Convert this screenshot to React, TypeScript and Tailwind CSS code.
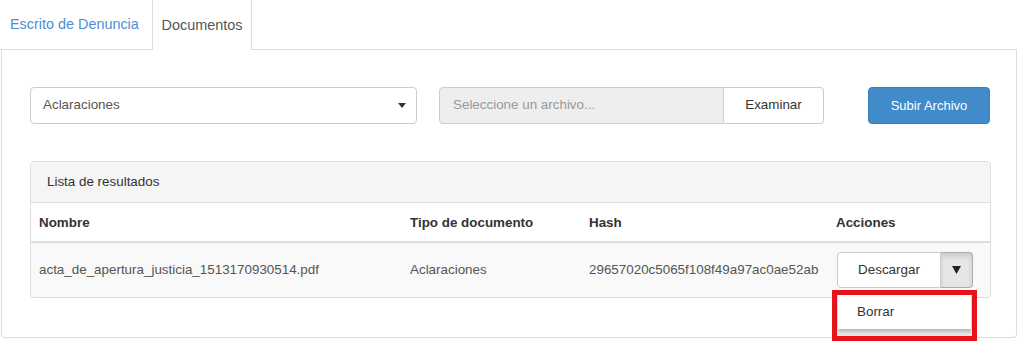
export default function App() {
  return (
    <div className="w-[1024px] h-[356px] bg-white text-[13.4px] text-[#555] font-['Liberation_Sans',Arial,sans-serif] overflow-hidden">
      {/* tabs */}
      <div className="flex h-[50px]">
        <div className="w-[152px] h-full flex items-center pl-[10px] pt-[1px] text-[14.4px] text-[#4a8fd6] border-b border-[#ddd]">
          Escrito de Denuncia
        </div>
        <div className="w-[100px] h-full flex items-center justify-center pt-[1px] text-[14.4px] text-[#555] border-x border-[#ddd] bg-white">
          Documentos
        </div>
        <div className="w-[765px] border-b border-[#ddd]" />
      </div>

      {/* tab content */}
      <div className="ml-[1px] w-[1016px] h-[288px] border-x border-b border-[#ddd] rounded-b-[4px] pt-[37px] pl-[28px] pr-[25px]">
        <div className="flex items-center h-[37px]">
          <div className="w-[387px] h-full border border-[#ccc] rounded-[4px] flex items-center justify-between pl-[12px] pr-[9px]">
            <span>Aclaraciones</span>
            <svg width="8" height="5" viewBox="0 0 8 5" className="mr-[1px]">
              <path d="M0 0 L8 0 L4 5 Z" fill="#333" />
            </svg>
          </div>
          <div className="ml-[22px] w-[385px] h-full flex">
            <div className="flex-1 h-full bg-[#eee] border border-[#ccc] rounded-l-[4px] flex items-center pl-[13px] text-[#999]">
              Seleccione un archivo...
            </div>
            <div className="w-[100px] h-full bg-white border border-l-0 border-[#ccc] rounded-r-[4px] flex items-center justify-center text-[#333]">
              Examinar
            </div>
          </div>
          <div className="ml-[44px] w-[122px] h-full bg-[#428bca] border border-[#3a7fbd] rounded-[4px] text-white text-[13px] flex items-center justify-center">
            Subir Archivo
          </div>
        </div>

        {/* results panel */}
        <div className="mt-[37px] w-[961px] border border-[#ddd] rounded-[4px] overflow-visible">
          <div className="h-[41px] bg-[#f5f5f5] border-b border-[#ddd] rounded-t-[4px] flex items-center pl-[16px] text-[#333]">
            Lista de resultados
          </div>
          <div className="grid grid-cols-[371px_179px_247px_1fr] h-[40px] border-b-2 border-[#ddd] items-center pt-[2px] font-bold text-[#333]">
            <div className="pl-[8px]">Nombre</div>
            <div className="pl-[8px]">Tipo de documento</div>
            <div className="pl-[8px]">Hash</div>
            <div className="pl-[8px]">Acciones</div>
          </div>
          <div className="grid grid-cols-[371px_179px_247px_1fr] h-[54px] bg-[#f9f9f9] items-center rounded-b-[4px]">
            <div className="pl-[8px]">acta_de_apertura_justicia_1513170930514.pdf</div>
            <div className="pl-[8px]">Aclaraciones</div>
            <div className="pl-[8px]">29657020c5065f108f49a97ac0ae52ab</div>
            <div className="pl-[9px] relative">
              <div className="flex h-[36px] w-[136px]">
                <div className="w-[104px] h-full bg-white border border-[#ccc] rounded-l-[4px] flex items-center justify-center text-[#333]">
                  Descargar
                </div>
                <div className="w-[32px] h-full bg-[#e6e6e6] border border-l-0 border-[#adadad] rounded-r-[4px] flex items-center justify-center shadow-[inset_0_3px_5px_rgba(0,0,0,0.125)]">
                  <svg width="9" height="8" viewBox="0 0 9 8">
                    <path d="M0 0 L9 0 L4.5 8 Z" fill="#222" />
                  </svg>
                </div>
              </div>
              {/* dropdown with highlight box */}
              <div className="absolute left-[4px] top-[38px] w-[145px] h-[51px] border-[5px] border-[#e8141c] bg-[#e9e9e9] z-10">
                <div className="ml-[1px] w-[133px] h-[34px] bg-white shadow-[0_3px_3px_rgba(0,0,0,0.2)] flex items-center pl-[19px] text-[#333]">
                  Borrar
                </div>
              </div>
            </div>
          </div>
        </div>
      </div>
    </div>
  );
}
